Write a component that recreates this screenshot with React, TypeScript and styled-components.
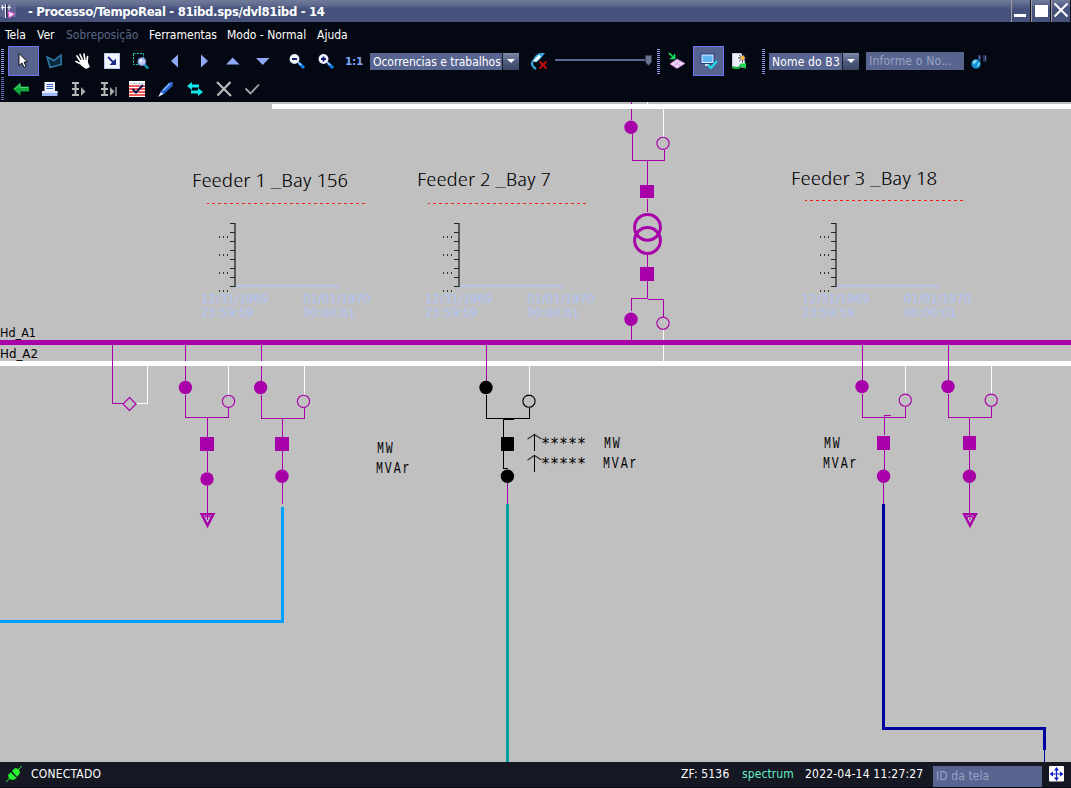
import React from 'react';
import styled, { createGlobalStyle } from 'styled-components';

const UI = `"DejaVu Sans Condensed", "DejaVu Sans", "Noto Sans", sans-serif`;
const PURPLE = '#a800a8';

const Global = createGlobalStyle`
  * { box-sizing: border-box; }
  html, body { margin: 0; padding: 0; background: #c0c0c0; }
  body { overflow: hidden; }
`;

const Window = styled.div`
  display: flex;
  flex-direction: column;
  width: 1071px;
  height: 788px;
  overflow: hidden;
  background: #c0c0c0;
  font-family: ${UI};
  font-stretch: condensed;
  font-size: 12px;
  color: #fff;
  white-space: nowrap;
`;

const TitleBar = styled.header`
  display: flex;
  align-items: stretch;
  height: 22px;
  flex: none;
  background: linear-gradient(#707b9b 0, #5f6a8e 5px, #46527c 9px, #46527c 100%);
`;

const AppIcon = styled.svg`
  width: 18px;
  height: 20px;
  flex: none;
`;

const Title = styled.h1`
  margin: 0 0 0 10px;
  flex: 1;
  font-size: 13px;
  font-weight: 700;
  line-height: 23px;
  letter-spacing: -0.32px;
`;

const WindowButton = styled.button`
  display: block;
  width: 20px;
  height: 22px;
  padding: 0;
  border: 0;
  border-left: 1px solid #a39c98;
  border-right: 1px solid #10141f;
  background: linear-gradient(#707b9b, #46527c 9px);
  svg { display: block; }
`;

const MenuBar = styled.nav`
  display: flex;
  height: 24px;
  flex: none;
  padding-left: 5px;
  background: #040812;
`;

const MenuItem = styled.span<{ $w: number; $off?: boolean }>`
  width: ${p => p.$w}px;
  line-height: 26px;
  color: ${p => (p.$off ? '#5d6784' : '#fff')};
`;

const ToolBar = styled.div<{ $h: number }>`
  display: flex;
  align-items: center;
  height: ${p => p.$h}px;
  flex: none;
  padding-left: 1px;
  background: #040812;
`;

const Grip = styled.i<{ $ml?: number; $h?: number; $dim?: boolean }>`
  width: 3px;
  height: ${p => p.$h ?? 25}px;
  margin-left: ${p => p.$ml ?? 0}px;
  background: repeating-linear-gradient(${p => (p.$dim ? '#6870b0' : '#9095ea')} 0 1px, #040812 1px 2px);
`;

const Tool = styled.button<{ $ml?: number; $w?: number; $active?: boolean }>`
  display: flex;
  align-items: center;
  justify-content: center;
  flex: none;
  width: ${p => p.$w ?? 16}px;
  height: ${p => (p.$active ? 30 : 16)}px;
  margin-left: ${p => p.$ml ?? 13}px;
  padding: 0;
  border: ${p => (p.$active ? '1px solid #6f73f4' : '0')};
  background: ${p => (p.$active ? '#56638e' : 'transparent')};
  svg { display: block; overflow: visible; }
`;

const Ratio = styled.span`
  width: 18px;
  margin-left: 11px;
  font: 700 10.5px/16px "DejaVu Sans", sans-serif;
  letter-spacing: -0.3px;
  color: #7aa5f5;
`;

const Select = styled.div<{ $ml: number; $w: number; $ls?: number }>`
  display: flex;
  width: ${p => p.$w}px;
  height: 17px;
  margin-left: ${p => p.$ml}px;
  span {
    flex: 1;
    padding-left: 3px;
    background: #586590;
    line-height: 18px;
    letter-spacing: ${p => p.$ls ?? 0}px;
    overflow: hidden;
  }
  b {
    width: 17px;
    border-left: 1px solid #171b28;
    background: linear-gradient(#808aa6, #4d587b 55%, #3d4765);
  }
  svg { display: block; }
`;

const SliderBox = styled.svg`
  display: block;
  margin-left: 8px;
  flex: none;
`;

const Field = styled.div<{ $ml: number; $w: number; $h: number; $ls?: number }>`
  width: ${p => p.$w}px;
  height: ${p => p.$h}px;
  margin-left: ${p => p.$ml}px;
  padding-left: 3px;
  background: #586590;
  line-height: ${p => p.$h}px;
  letter-spacing: ${p => p.$ls ?? 0}px;
  color: #9aa4c2;
`;

const Canvas = styled.main`
  flex: 1;
  min-height: 0;
  background: #c0c0c0;
  svg { display: block; }
`;

const StatusBar = styled.footer`
  display: flex;
  height: 26px;
  flex: none;
  padding-left: 6px;
  background: #151722;
  border-bottom: 1px solid #05070d;
`;

const StatusText = styled.span<{ $w?: number; $ls?: number; $accent?: boolean }>`
  ${p => (p.$w ? `width: ${p.$w}px;` : 'flex: 1;')}
  line-height: 24px;
  letter-spacing: ${p => p.$ls ?? 0}px;
  color: ${p => (p.$accent ? '#62efc4' : '#fff')};
`;

const PlugIcon = styled.svg`
  width: 16px;
  height: 17px;
  margin: 4px 9px 0 0;
`;

const StatusField = styled(Field)`
  margin-top: 4px;
`;

const PanIcon = styled.svg`
  margin: 4px 7px 0;
  flex: none;
`;

const I: React.FC<{ children: React.ReactNode }> = ({ children }) => (
  <svg width="16" height="16" viewBox="0 0 16 16">{children}</svg>
);

const Magnifier = ({ plus }: { plus?: boolean }) => (
  <I>
    <path d="M10 10 L15 15" stroke="#1280f0" strokeWidth="3" />
    <path d="M9 9 L12 12" stroke="#9ad4ff" strokeWidth="1.5" />
    <circle cx="5.5" cy="6" r="5" fill="#d7def8" />
    <circle cx="5.5" cy="6" r="4.2" fill="#f7f8ff" />
    <path d={plus ? 'M3 6H8M5.5 3.5V8.5' : 'M3 6H8'} stroke="#101c68" strokeWidth="2" />
  </I>
);

const Steps = ({ end }: { end?: boolean }) => (
  <I>
    <path d="M1 2H8M1 8H8M1 14H8M4.5 2V14" stroke="#b8b8b8" strokeWidth="2" fill="none" />
    <path d="M10 6L14.5 10.5L10 15Z" fill="#a8a8a8" />
    {end && <path d="M16 6V15" stroke="#b8b8b8" strokeWidth="1.2" />}
  </I>
);

const Caret = () => (
  <svg width="16" height="17"><path d="M4 6H12L8 10Z" fill="#fff" /></svg>
);

/* ---------- single-line diagram parts ---------- */

type P = { x: number; y: number; c?: string };
const Closed = ({ x, y, c = PURPLE }: P) => <circle cx={x} cy={y} r="6.7" fill={c} />;
const Open = ({ x, y, c = PURPLE }: P) => <circle cx={x} cy={y} r="6.1" fill="none" stroke={c} strokeWidth="1.1" />;
const Breaker = ({ x, y, w = 14, h = 14, c = PURPLE }: P & { w?: number; h?: number }) => (
  <rect x={x} y={y} width={w} height={h} fill={c} />
);
const Wire = ({ d, c = PURPLE, w = 1 }: { d: string; c?: string; w?: number }) => (
  <path d={d} fill="none" stroke={c} strokeWidth={w} shapeRendering="crispEdges" />
);
const Load = ({ x, y }: P) => (
  <g transform={`translate(${x} ${y})`}>
    <path d="M1.6 1.2H13.4L7.5 12.6Z" fill="none" stroke={PURPLE} strokeWidth="2.4" />
    <path d="M7.5 1V7M5 5V3.5H10V5" fill="none" stroke={PURPLE} strokeWidth="1" />
  </g>
);

const Feeder = ({ x, name, nx, ny, nw, dx, dy, dc }: {
  x: number; name: string; nx: number; ny: number; nw: number; dx: number; dy: number; dc: string;
}) => (
  <g>
    <text x={nx - 1} y={ny} textLength={nw} lengthAdjust="spacingAndGlyphs" fontFamily="Open Sans, Noto Sans, sans-serif" fontWeight="300" fontSize="18" fill="#000">{name}</text>
    <path d={`M${dx} ${dy + 0.5}H${dx + 158}`} stroke={dc} strokeDasharray="3 3" strokeDashoffset="1" shapeRendering="crispEdges" />
    <g transform={`translate(${x} 0)`}>
      <path d="M.5 286V290M102.500 286V290" stroke="#b5c3e2" strokeWidth="1" fill="none" />
      <rect x="1" y="285" width="102" height="2" fill="#b8c5e0" />
      <rect x="-1" y="223" width="2" height="64" fill="#5c5c5c" />
      {[223, 232, 241, 250, 259, 268, 277, 286].map(y => (
        <rect key={y} x="-5" y={y} width="5" height="1" fill="#222" />
      ))}
      {[236, 254, 272, 290].map(y => [-16, -12, -8].map(t => (
        <rect key={`${y}${t}`} x={t} y={y} width="1" height="2" fill="#333" />
      )))}
      <g fill="#b2c5fa" fontFamily="DejaVu Sans Condensed, DejaVu Sans, sans-serif" fontSize="13">
        <text x="-34" y="303">12/31/1969</text>
        <text x="-34" y="317">23:59:59</text>
        <text x="68" y="303">01/01/1970</text>
        <text x="68" y="317">00:00:01</text>
      </g>
    </g>
  </g>
);

const Units = ({ x, y }: P) => (
  <g fontFamily="Liberation Mono, monospace" fontSize="17" letterSpacing="2.800" fill="#000">
    <text transform={`translate(${x} ${y}) scale(.68 1)`}>MW</text>
    <text transform={`translate(${x - 1} ${y + 20}) scale(.68 1)`}>MVAr</text>
  </g>
);

const Arrow = ({ y }: { y: number }) => (
  <g fill="none">
    <path d={`M527.500 ${y + 5}L534.500 ${y + 0.500}L541.500 ${y + 5}`} stroke="#333" strokeWidth="1.200" />
    <Wire d={`M534.500 ${y}V${y + 17}`} c="#000" />
  </g>
);

const Diagram = () => (
  <svg width="1071" height="660" viewBox="0 102 1071 660">
    <Wire d="M631.5 102V120M632.5 134V160.5H664.5V150M647.5 160V185M647.5 199V212M647.5 255V267M647.5 281V299M647.5 298.5H631.5V311M647.5 299.5H663.5V317M631.5 326V340" />
    <Wire c="#fff" d="M647.5 102V104M663.5 109V137M663.5 330V361" />
    <Closed x={631} y={127.3} /><Open x={663} y={143.3} />
    <Breaker x={640} y={185} h={13} /><Breaker x={640} y={267} />
    <circle cx="647.5" cy="227.3" r="12.9" fill="none" stroke={PURPLE} strokeWidth="3" />
    <circle cx="647.5" cy="240.5" r="12.9" fill="none" stroke={PURPLE} strokeWidth="3" />
    <Closed x={631} y={319.2} /><Open x={663} y={323.2} />
    <Wire d="M185.5 345V381M261.5 345V381" />
    <rect x="272" y="104" width="799" height="5" fill="#fff" />
    <rect x="0" y="340" width="1071" height="5" fill={PURPLE} />
    <rect x="0" y="361" width="1071" height="5" fill="#fff" />
    <g fontFamily="DejaVu Sans Condensed, DejaVu Sans" fontSize="12" fill="#000">
      <text x="0" y="337" textLength="36" lengthAdjust="spacingAndGlyphs">Hd_A1</text>
      <text x="0" y="358" textLength="38" lengthAdjust="spacingAndGlyphs">Hd_A2</text>
    </g>

    <Feeder x={235} name="Feeder 1 _Bay 156" nx={193} ny={187} nw={156} dx={207} dy={203} dc="#e82a18" />
    <Feeder x={459} name="Feeder 2 _Bay 7" nx={418} ny={186} nw={134} dx={428} dy={203} dc="#e82a18" />
    <Feeder x={836} name="Feeder 3 _Bay 18" nx={792} ny={185} nw={146} dx={805} dy={200} dc="#ff1a10" />

    <Wire d="M112.5 345V403.5H124" />
    <Wire c="#fff" d="M147.5 366V403.5H137" />
    <path d="M129.5 397.5L136 404L129.5 410.5L123 404Z" fill="none" stroke={PURPLE} strokeWidth="1.2" />

    <Wire c="#fff" d="M228.5 366V395M304.5 366V395M529.5 366V395M905.5 366V394M991.5 366V394" />

    <Wire d="M185.5 395V417.5H228.5V408M207.5 417V437M207.5 451V472M207.5 486V513" />
    <Closed x={185.4} y={387.5} /><Open x={228.5} y={401.3} />
    <Breaker x={200} y={437} /><Closed x={207} y={479} /><Load x={200} y={513} />

    <Wire d="M261.5 395V418.5H304.5V408M282.5 418V437M282.5 451V470M282.5 483V504" />
    <Closed x={260.6} y={387.5} /><Open x={303.5} y={401.3} />
    <Breaker x={275} y={437} /><Closed x={282} y={476.3} />
    <Wire c="#00a0ff" w={3} d="M282.5 507V621.5H0" />

    <Wire d="M486.5 345V381M507.5 483V504" />
    <Wire c="#000" d="M486.5 395V418.5H529.5V408M514 419.5H503.5V437M503.5 451V468.5H508" />
    <Closed c="#000" x={486} y={387.5} /><Open c="#000" x={529} y={401.2} />
    <Breaker c="#000" x={501} y={437} w={13} /><Closed c="#000" x={507.4} y={476.3} />
    <Wire c="#00a0a0" w={3} d="M507.5 504V762" />
    <Arrow y={434} /><Arrow y={455} />
    <g fontFamily="DejaVu Sans Mono, monospace" fontSize="15" fill="#000">
      <text x="541" y="449" textLength="45">*****</text>
      <text x="541" y="469" textLength="45">*****</text>
    </g>
    <Units x={377} y={453} /><Units x={604} y={448} /><Units x={824} y={448} />

    <Wire d="M862.5 345V380M862.5 394V417.5H905.5V407M891 415.5H884.5V435M884.5 450V470M883.5 483V504" />
    <Closed x={862} y={386.6} /><Open x={905.3} y={400.2} />
    <Breaker x={877} y={436} w={13} /><Closed x={883.6} y={476.3} />
    <Wire c="#0000a0" w={3} d="M883.5 504V728.5H1044.5V750" />
    <Wire c="#0000a0" d="M1044.5 750V762" />

    <Wire d="M948.5 345V380M948.5 394V417.5H991.5V407M969.5 417V436M969.5 450V470M969.5 483V513" />
    <Closed x={948} y={386.6} /><Open x={991.2} y={400.2} />
    <Breaker x={963} y={436} w={13} /><Closed x={969.4} y={476.3} /><Load x={962.5} y={513} />
  </svg>
);

export default function App() {
  return (
    <Window>
      <Global />
      <TitleBar>
        <AppIcon viewBox="0 0 18 20">
          <rect y="3" width="16" height="14" fill="#66709a" opacity=".7" />
          <path d="M5.5 4V18M1 7.5H11M2.500 5V10M9 5V10" stroke="#e8eaf6" strokeWidth="1.2" fill="none" />
          <path d="M6.700 4V17" stroke="#171b40" strokeWidth="1.2" />
          <path d="M8 11L15 14L9 18Z" fill="#f4d8f8" stroke="#e04ccc" />
        </AppIcon>
        <Title>- Processo/TempoReal - 81ibd.sps/dvl81ibd - 14</Title>
        <WindowButton><svg width="18" height="22"><rect x="2" y="14" width="12" height="3" fill="#fff" /></svg></WindowButton>
        <WindowButton><svg width="18" height="22"><rect x="3" y="5" width="13" height="12" fill="#fff" /></svg></WindowButton>
        <WindowButton><svg width="18" height="22"><path d="M2.5 3.5L15.5 16.5M15.5 3.5L2.5 16.5" stroke="#fff" strokeWidth="2" /></svg></WindowButton>
      </TitleBar>
      <MenuBar>
        <MenuItem $w={32}>Tela</MenuItem>
        <MenuItem $w={29}>Ver</MenuItem>
        <MenuItem $w={83} $off>Sobreposição</MenuItem>
        <MenuItem $w={78}>Ferramentas</MenuItem>
        <MenuItem $w={90}>Modo - Normal</MenuItem>
        <MenuItem $w={40}>Ajuda</MenuItem>
      </MenuBar>
      <ToolBar $h={30}>
        <Grip />
        <Tool $ml={4} $w={31} $active>
          <I><path d="M3 .5V12.5L6 10L8 14.5L10 13.5L8 9H11.5Z" fill="#fff" stroke="#000" strokeWidth=".9" /></I>
        </Tool>
        <Tool $ml={7}><I><path d="M1 4L8 7.5L15 2L15.3 11.5L4 14.5Z" fill="#0d2c3d" stroke="#2b7cab" strokeWidth="1.5" /></I></Tool>
        <Tool><I>
          <path d="M2 3L6 9M5 1.5L8 8M9 1L10 8M12.5 3.5L12 9M1 8.5L6 11" stroke="#fff" strokeWidth="1.7" strokeLinecap="round" />
          <path d="M5 7L12 7L14 12L15 14L11 16L6 12.5Z" fill="#fff" />
        </I></Tool>
        <Tool><I>
          <rect x=".5" y=".5" width="15" height="15" fill="#f4f6ff" stroke="#bcc8f0" />
          <path d="M4 4L10.5 10.5" stroke="#1a2a8c" strokeWidth="2" /><path d="M12 5.5V12H5.5Z" fill="#1a2a8c" />
        </I></Tool>
        <Tool><I>
          <rect x=".5" y=".5" width="10" height="11" fill="none" stroke="#12d8c8" strokeDasharray="2 1.3" />
          <path d="M11 11L15 15.5" stroke="#16a0b8" strokeWidth="2.5" />
          <circle cx="8.8" cy="8.6" r="3.9" fill="#b9c6f5" stroke="#7f90d8" /><circle cx="8" cy="7.8" r="1.6" fill="#eef2ff" />
        </I></Tool>
        <Tool $ml={18}><I><path d="M11 1.5V14.5L4 8Z" fill="#8fa8f6" /></I></Tool>
        <Tool $ml={14}><I><path d="M4 1.5V14.5L11 8Z" fill="#8fa8f6" /></I></Tool>
        <Tool $ml={12}><I><path d="M1 11.5H14.5L7.7 4.5Z" fill="#8fa8f6" /></I></Tool>
        <Tool $ml={14}><I><path d="M1 5H14.5L7.7 12Z" fill="#8fa8f6" /></I></Tool>
        <Tool $ml={18}><Magnifier /></Tool>
        <Tool><Magnifier plus /></Tool>
        <Ratio>1:1</Ratio>
        <Select $ml={7} $w={149} $ls={-0.03}><span>Ocorrencias e trabalhos</span><b><Caret /></b></Select>
        <Tool $ml={12}><I>
          <path d="M2 8Q-1 12 5 16" stroke="#3aa4d8" strokeWidth="2.2" fill="none" />
          <path d="M1 8L5 2L9 0H14L10 5L6 9Z" fill="#35a6e8" /><path d="M2 8L8 1.500L10 4L5 9Z" fill="#f2fbff" />
          <path d="M8.5 8.5L15.5 15.5M15.5 8.5L8.5 15.5" stroke="#c80a0a" strokeWidth="1.8" />
        </I></Tool>
        <SliderBox width="98" height="16">
          <rect x="0" y="6" width="90" height="2" fill="#5c6790" />
          <path d="M90.500 2.500H96.500V9L93.500 12.500L90.500 9Z" fill="#69738f" stroke="#343b52" />
        </SliderBox>
        <Grip $ml={4} />
        <Tool $ml={9}><I>
          <path d="M1 11L8 6L16 10.500L8 15.500Z" fill="#f1d9f6" stroke="#c96fd2" strokeWidth=".7" />
          <path d="M4.500 8.500L12 13M4.500 13L12 8" stroke="#d08adb" strokeWidth=".7" />
          <path d="M0 0L5 5M5.500 1V5.500H1" stroke="#10e860" strokeWidth="1.7" fill="none" />
        </I></Tool>
        <Tool $ml={8} $w={31} $active><I>
          <rect x="0" y="1" width="13" height="9.500" fill="#e8f2ff" stroke="#203c90" />
          <rect x="1.500" y="2.500" width="10" height="6.500" fill="#5db4f2" />
          <path d="M4 12H8" stroke="#c7d4f4" strokeWidth="2" />
          <path d="M7 12L10 15L16 8" stroke="#12e4e8" strokeWidth="2" fill="none" />
        </I></Tool>
        <Tool $ml={7}><I>
          <path d="M1.500 .5H10L13.500 4V14H1.500Z" fill="#eef1fb" stroke="#c7cce2" />
          <path d="M1 14Q8 17 10.500 12" stroke="#12ae3c" strokeWidth="2" fill="none" /><path d="M8 11L15 10V16Z" fill="#17d84c" />
          <path d="M7 5H16M11.500 .5V9.500M8.300 2L14.700 8.200M14.700 2L8.300 8.200" stroke="#3b3152" strokeWidth="1" />
          <circle cx="11.500" cy="5" r="2" fill="#ffba38" />
        </I></Tool>
        <Grip $ml={15} />
        <Select $ml={4} $w={90} $ls={0.15}><span>Nome do B3</span><b><Caret /></b></Select>
        <Field $ml={7} $w={98} $h={18} $ls={0.2}>Informe o No...</Field>
        <Tool $ml={7}><I>
          <path d="M7 2H10V8H7ZM12 2H15.500V9H12Z" fill="#26305e" /><path d="M8.500 3V6M14.500 3V7" stroke="#626d9c" />
          <circle cx="5" cy="11" r="4.700" fill="#168fd5" /><path d="M1.500 9Q3 6 6 7L5 10L2 11ZM7 10L9 9L8 13L6 14Z" fill="#79daf4" />
        </I></Tool>
      </ToolBar>
      <ToolBar $h={26}>
        <Grip $h={24} $dim />
        <Tool $ml={9}><I><path d="M0 8L7.500 1.500V5.500H16V10.500H7.500V14.500Z" fill="#13a83c" /><path d="M2 8L7 3.500V6.500H15" stroke="#48d870" fill="none" /></I></Tool>
        <Tool><I>
          <rect x="2.500" y="1" width="10.500" height="9" fill="#f6f8ff" /><path d="M4.500 3.500H11M4.500 5.500H11M4.500 7.500H11" stroke="#2e58c8" />
          <rect x="0" y="10" width="15.500" height="5" fill="#9db8f4" /><path d="M0 11H15.500" stroke="#e0e9ff" strokeWidth="2" />
        </I></Tool>
        <Tool><Steps /></Tool>
        <Tool><Steps end /></Tool>
        <Tool><I>
          <rect x="0" y="0" width="16" height="16" fill="#fff" />
          <path d="M0 5H16M0 8H16M0 11H16M0 14H16" stroke="#f02020" strokeWidth="1.500" /><path d="M0 2.500H16M5.500 1V5M10.500 1V5" stroke="#b8bccd" strokeWidth=".7" />
          <path d="M3.500 8L7 11.500L14 4" stroke="#10194f" strokeWidth="2" fill="none" />
        </I></Tool>
        <Tool><I>
          <path d="M1 15L3 10L11 1.500L15 1L14.500 5L6 13Z" fill="#2d66d4" /><path d="M5 9.500L12 2.500" stroke="#8ab4f8" strokeWidth="1.500" /><path d="M0 16L3 11L5.500 13Z" fill="#dce6ff" />
        </I></Tool>
        <Tool><I>
          <path d="M0 5L5 1V3.500H12V6.500H5V9Z" fill="#10e8ec" /><path d="M16 11L11 7V9.500H4V12.500H11V15Z" fill="#10e8ec" />
        </I></Tool>
        <Tool><I><path d="M1 1L15 15M14.500 1L1.500 14.500" stroke="#b9b9b9" strokeWidth="2.300" /></I></Tool>
        <Tool><I><path d="M.5 7.500L5.500 12.500L14 3.500" stroke="#a6a6a6" strokeWidth="1.800" fill="none" /></I></Tool>
      </ToolBar>
      <Canvas><Diagram /></Canvas>
      <StatusBar>
        <PlugIcon viewBox="0 0 16 17">
          <path d="M0 16L16 0" stroke="#22f02c" strokeWidth="1" />
          <path d="M2 9L5 6L11 12L7 14L3 13Z" fill="#26f030" /><path d="M6 5L9 2L13 3L14 7L11 11Z" fill="#26f030" /><path d="M5 6L11 12" stroke="#151722" />
        </PlugIcon>
        <StatusText $ls={0.2}>CONECTADO</StatusText>
        <StatusText $w={61} $ls={0.15}>ZF: 5136</StatusText>
        <StatusText $w={63} $ls={0.1} $accent>spectrum</StatusText>
        <StatusText $w={128} $ls={0.2}>2022-04-14 11:27:27</StatusText>
        <StatusField $ml={0} $w={109} $h={21} $ls={0.1}>ID da tela</StatusField>
        <PanIcon width="15" height="16" viewBox="0 0 15 16">
          <rect width="15" height="15.500" rx="1" fill="#fff" />
          <path d="M7.500 3V13M2.500 8H12.500" stroke="#0c1ec0" strokeWidth="1.200" />
          <path d="M5 4.500L7.500 1L10 4.500ZM5 11.500L7.500 15L10 11.500ZM4 5.500L.5 8L4 10.500ZM11 5.500L14.500 8L11 10.500Z" fill="#0c1ec0" />
        </PanIcon>
      </StatusBar>
    </Window>
  );
}
